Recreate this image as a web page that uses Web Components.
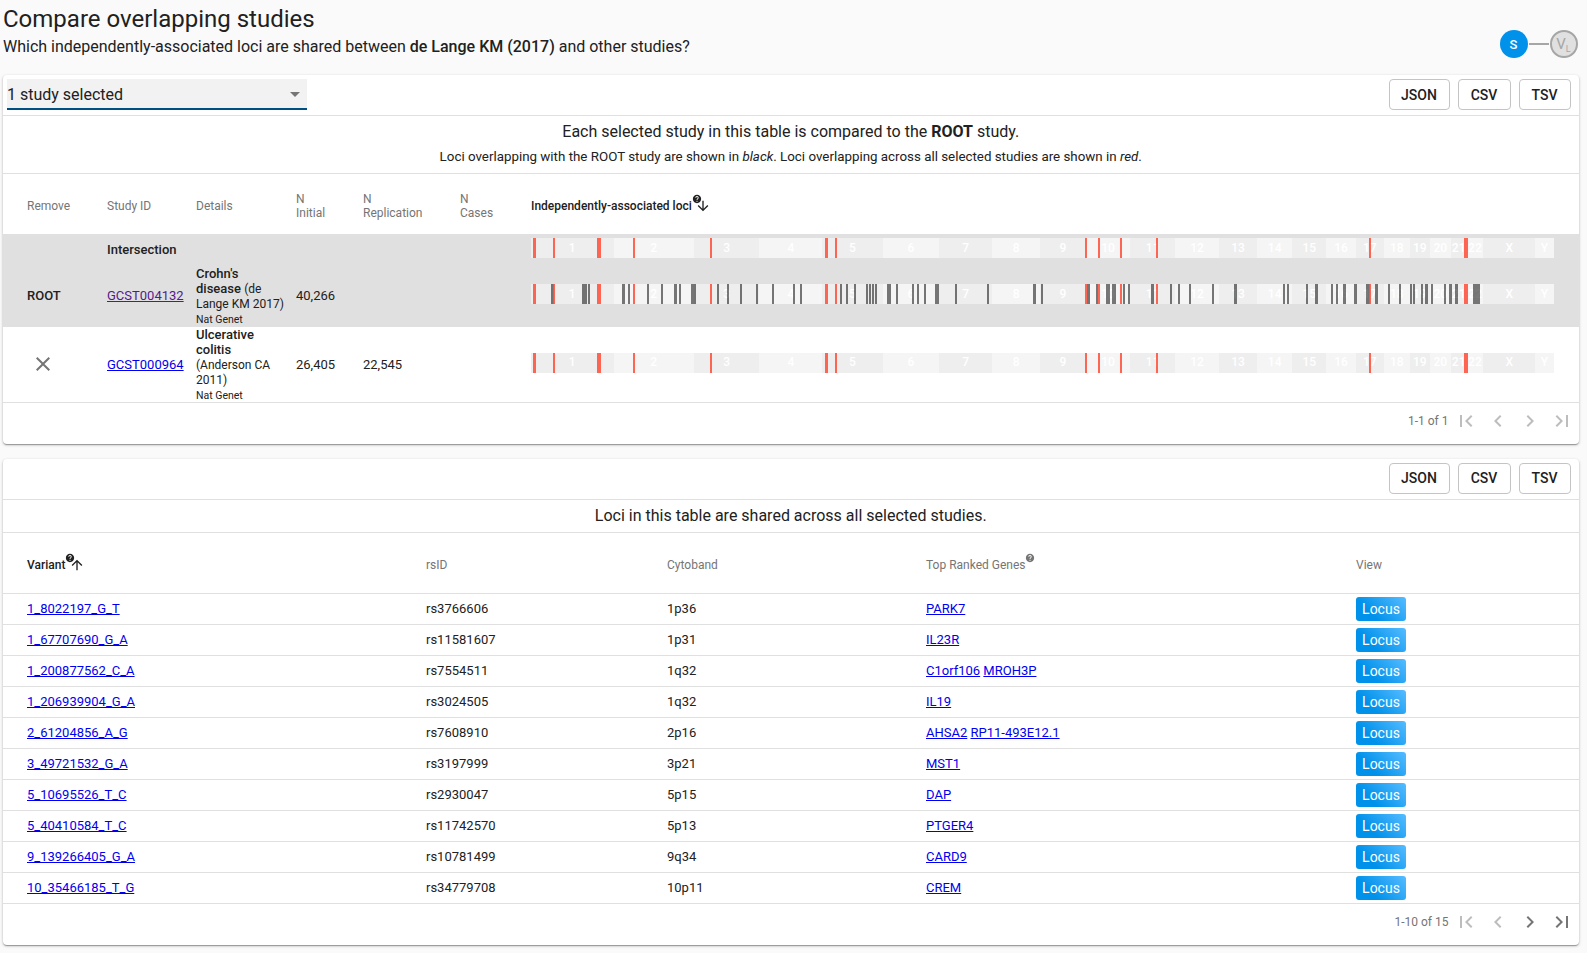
<!DOCTYPE html>
<html lang="en">
<head>
<meta charset="utf-8">
<title>Compare overlapping studies</title>
<style>
  html, body { margin: 0; background: #fafafa; }
  body {
    padding: 0 8.5px 8px 3px;
    font-family: Roboto, "Liberation Sans", sans-serif;
    color: rgba(0, 0, 0, 0.87);
  }
</style>
</head>
<body>
<compare-header></compare-header>

<data-card>
  <select-box slot="left">1 study selected</select-box>
  <card-message>
    <div class="big">Each selected study in this table is compared to the <b>ROOT</b> study.</div>
    <div class="small">Loci overlapping with the ROOT study are shown in <i>black</i>. Loci overlapping across all selected studies are shown in <i>red</i>.</div>
  </card-message>
  <studies-table></studies-table>
  <table-pager label="1-1 of 1"></table-pager>
</data-card>

<data-card>
  <card-message compact>
    <div class="big">Loci in this table are shared across all selected studies.</div>
  </card-message>
  <loci-table></loci-table>
  <table-pager label="1-10 of 15" has-next></table-pager>
</data-card>

<script>
// Material icon paths
const ICONS = {
  help: 'M12 2C6.48 2 2 6.48 2 12s4.48 10 10 10 10-4.48 10-10S17.52 2 12 2zm1 17h-2v-2h2v2zm2.07-7.75l-.9.92C13.45 12.9 13 13.5 13 15h-2v-.5c0-1.1.45-2.1 1.17-2.83l1.24-1.26c.37-.36.59-.86.59-1.41 0-1.1-.9-2-2-2s-2 .9-2 2H8c0-2.21 1.79-4 4-4s4 1.79 4 4c0 .88-.36 1.68-.93 2.25z',
  down: 'M20 12l-1.41-1.41L13 16.17V4h-2v12.17l-5.58-5.59L4 12l8 8 8-8z',
  up: 'M4 12l1.41 1.41L11 7.83V20h2V7.83l5.58 5.59L20 12l-8-8-8 8z',
  close: 'M19 6.41L17.59 5 12 10.59 6.41 5 5 6.41 10.59 12 5 17.59 6.41 19 12 13.41 17.59 19 19 17.59 13.41 12z',
  first: 'M18.41 16.59L13.82 12l4.59-4.59L17 6l-6 6 6 6zM6 6h2v12H6z',
  prev: 'M15.41 7.41L14 6l-6 6 6 6 1.41-1.41L10.83 12z',
  next: 'M8.59 16.59L13.17 12 8.59 7.41 10 6l6 6-6 6z',
  last: 'M5.59 7.41L10.18 12l-4.59 4.59L7 18l6-6-6-6zM16 6h2v12h-2z'
};

const icon = (name, size, color, cls = '') =>
  `<svg class="${cls}" width="${size}" height="${size}" viewBox="0 0 24 24" fill="${color}" aria-hidden="true"><path d="${ICONS[name]}"/></svg>`;

// Shared by both tables
const TABLE_CSS = `
  table { border-collapse: collapse; table-layout: fixed; width: 100%; font-size: 13px; color: #212121; }
  th {
    height: 56px; padding: 4px 0 0; text-align: left; vertical-align: middle;
    font-size: 12px; font-weight: 400; line-height: 14px; color: #757575;
    border-bottom: 1px solid #e0e0e0;
  }
  th.sorted { font-weight: 500; color: #212121; }
  td { padding: 0; vertical-align: middle; line-height: 15px; }
  th:first-child, td:first-child { padding-left: 24px; }
  a { color: #0000ee; text-decoration: underline; }
  a.visited { color: #551a8b; }
  .head { display: inline-flex; align-items: center; }
  .head .help { margin: -14px 0 0 0; }
  .head .sort { margin-left: -6.5px; }
`;

class CompareHeader extends HTMLElement {
  constructor() {
    super();
    this.attachShadow({ mode: 'open' });
    this.shadowRoot.innerHTML = `
      <style>
        :host { display: flex; justify-content: space-between; height: 75px; }
        h1 { margin: 0; padding-top: 5px; font-size: 24px; font-weight: 400; line-height: 29px; color: #212121; }
        p { margin: 0; padding-top: 3px; font-size: 16px; line-height: 19px; color: #212121; }
        b { font-weight: 500; }
      </style>
      <div>
        <h1>Compare overlapping studies</h1>
        <p>Which independently-associated loci are shared between <b>de Lange KM (2017)</b> and other studies?</p>
      </div>
      <study-dag></study-dag>
    `;
  }
}

class StudyDag extends HTMLElement {
  constructor() {
    super();
    this.attachShadow({ mode: 'open' });
    this.shadowRoot.innerHTML = `
      <style>
        :host { display: flex; align-items: center; height: 28px; margin: 30px 1px 0 0; }
        .node {
          box-sizing: border-box; width: 28px; height: 28px; border-radius: 50%;
          display: flex; align-items: center; justify-content: center;
        }
        .s { background: #0091ea; color: #fff; font-size: 13px; font-weight: 500; }
        .v { background: #e0e0e0; border: 2px solid #a6a6a6; color: #a6a6a6; font-size: 15px; }
        .v sub { font-size: 9px; line-height: 0; margin-top: 9px; }
        .line { width: 20px; height: 2px; margin: 0 1px; background: #a6a6a6; }
      </style>
      <div class="node s">S</div>
      <div class="line"></div>
      <div class="node v">V<sub>L</sub></div>
    `;
  }
}

class DataCard extends HTMLElement {
  constructor() {
    super();
    this.attachShadow({ mode: 'open' });
    this.shadowRoot.innerHTML = `
      <style>
        :host {
          display: block; margin-bottom: 15px; background: #fff; border-radius: 4px;
          box-shadow: 0 1px 3px rgba(0,0,0,.25), 0 1px 1px rgba(0,0,0,.16), 0 2px 1px -1px rgba(0,0,0,.14);
        }
        .bar {
          display: flex; align-items: flex-start; justify-content: space-between;
          height: 36px; padding: 4px 8px 0 4px; border-bottom: 1px solid #e0e0e0;
        }
        .buttons { display: flex; gap: 8px; margin-left: auto; }
        button {
          box-sizing: border-box; height: 31px; padding: 0; background: #fff;
          border: 1px solid #c4c4c4; border-radius: 4px;
          font: 500 14px Roboto, sans-serif; color: #212121;
        }
        .json { width: 61px; } .csv { width: 53px; } .tsv { width: 52px; }
      </style>
      <div class="bar">
        <slot name="left"></slot>
        <div class="buttons">
          <button class="json">JSON</button>
          <button class="csv">CSV</button>
          <button class="tsv">TSV</button>
        </div>
      </div>
      <slot></slot>
    `;
  }
}

class SelectBox extends HTMLElement {
  constructor() {
    super();
    this.attachShadow({ mode: 'open' });
    this.shadowRoot.innerHTML = `
      <style>
        :host {
          display: flex; align-items: center; justify-content: space-between;
          box-sizing: border-box; width: 300px; height: 31px;
          background: #f2f2f2; border-bottom: 2px solid #004f83;
          font-size: 16px; color: #212121;
        }
        span { padding-top: 2px; }
        .arrow { width: 0; height: 0; padding: 0; margin: 2px 7px 0 0; border: 5px solid transparent; border-top-color: #757575; border-bottom: 0; }
      </style>
      <span><slot></slot></span>
      <span class="arrow"></span>
    `;
  }
}

class CardMessage extends HTMLElement {
  constructor() {
    super();
    this.attachShadow({ mode: 'open' });
    this.shadowRoot.innerHTML = `
      <style>
        :host {
          display: block; box-sizing: border-box; height: 58px; padding-top: 6px;
          text-align: center; border-bottom: 1px solid #e0e0e0; color: #212121;
        }
        :host([compact]) { height: 33px; }
        ::slotted(.big) { font-size: 16px; line-height: 19px; }
        ::slotted(.small) { font-size: 13.35px; line-height: 15px; margin-top: 8px; }
      </style>
      <slot></slot>
    `;
  }
}

// Chromosome sizes in Mb, the track is laid out in proportion to them
const CHROMOSOMES = [
  ['1', 249], ['2', 242], ['3', 198], ['4', 190], ['5', 181.5], ['6', 171], ['7', 159], ['8', 145],
  ['9', 138], ['10', 134], ['11', 135], ['12', 133], ['13', 114], ['14', 107], ['15', 102], ['16', 90],
  ['17', 83], ['18', 80], ['19', 59], ['20', 64], ['21', 47], ['22', 51], ['X', 156], ['Y', 57]
];

const RED_LOCI = [
  [2, 2.5], [21.6, 2], [66.4, 4], [101.9, 2.2], [178.6, 2], [294.4, 1.8], [304, 1.8],
  [553.9, 2.2], [566.6, 2], [588.6, 2], [624.6, 2], [838.1, 2], [933, 3.6]
];

const GREY_LOCI = [
  [20.3, 2.5], [50.9, 5], [56.8, 1.5], [90.9, 3.5], [96.7, 2], [115.7, 2], [130.1, 2], [142.9, 3.5],
  [147.7, 2], [159.7, 5], [185.6, 2], [195.6, 2], [208.6, 2.5], [224.5, 2], [240.7, 2], [261.7, 2],
  [268.6, 1.8], [309.2, 1.8], [314.7, 2], [322.6, 2], [335, 2], [337.8, 1.8], [340.5, 1.8], [343.6, 1.8],
  [356.4, 3.5], [364.6, 1.8], [380.5, 1.8], [386, 1.8], [392.9, 2.5], [404.2, 3.5], [423.9, 2], [456.2, 1.8],
  [502, 2.8], [509.6, 2], [556.3, 3], [564.8, 1.8], [575.4, 3.5], [580.9, 3.8], [591.5, 1.8], [596.7, 1.8],
  [620.3, 2.8], [638.8, 2], [646.7, 1.8], [657.6, 1.8], [681.3, 2], [702.8, 2.8], [751.5, 2], [755.6, 2],
  [774.8, 1.8], [784.4, 1.8], [799.8, 1.8], [805.2, 1.8], [812.4, 1.8], [823.4, 1.8], [835.4, 3.5], [843.9, 2.8],
  [856.6, 2], [867.9, 2], [878.9, 1.8], [881.6, 1.8], [889.5, 2], [894.3, 2.4], [899.8, 1.8], [912.8, 1.8],
  [917.6, 3], [924.4, 1.8], [942.2, 2.4], [944.6, 1.8], [947, 1.8]
];

class ChrTrack extends HTMLElement {
  connectedCallback() {
    if (this.shadowRoot) return;
    this.attachShadow({ mode: 'open' });
    const marks = (list, cls) => list.map(([x, w]) =>
      `<i class="${cls}" style="left:${x}px;width:${Math.max(w, 2.2)}px"></i>`).join('');
    const bands = CHROMOSOMES.map(([name, size], i) =>
      `<div class="${i % 2 ? 'light' : 'dark'}" style="flex:${size} ${size} 0">${name}</div>`).join('');
    this.shadowRoot.innerHTML = `
      <style>
        :host { display: flex; position: relative; width: 1023px; height: 20px; margin-bottom: 3px; overflow: hidden; }
        div {
          display: flex; align-items: center; justify-content: center; min-width: 0;
          font-size: 12px; font-weight: 500; color: #fff;
        }
        .dark { background: #eeeeee; }
        .light { background: #f5f5f5; }
        i { position: absolute; top: 0; bottom: 0; }
        .red { background: rgba(255, 82, 60, 0.88); }
        .grey { background: rgba(0, 0, 0, 0.52); }
      </style>
      ${bands}
      ${this.hasAttribute('all') ? marks(GREY_LOCI, 'grey') : ''}
      ${marks(RED_LOCI, 'red')}
    `;
  }
}

class StudiesTable extends HTMLElement {
  constructor() {
    super();
    this.attachShadow({ mode: 'open' });
    this.shadowRoot.innerHTML = `
      <style>
        :host { display: block; }
        ${TABLE_CSS}
        .root { background: #e0e0e0; }
        b { font-weight: 500; }
        small { font-size: 10.5px; line-height: 1; }
        .details { padding-right: 11px; }
        .paper { font-size: 12px; line-height: 1; }
        .close { display: block; margin-left: 4px; }
        .gap { height: 30px; }
        .root-row { height: 62px; }
        .last { height: 75px; border-bottom: 1px solid #e0e0e0; }
      </style>
      <table>
        <colgroup>
          <col style="width:104px"><col style="width:89px"><col style="width:100px">
          <col style="width:67px"><col style="width:97px"><col style="width:71px"><col>
        </colgroup>
        <thead>
          <tr>
            <th>Remove</th>
            <th>Study ID</th>
            <th>Details</th>
            <th>N<br>Initial</th>
            <th>N<br>Replication</th>
            <th>N<br>Cases</th>
            <th class="sorted"><span class="head">Independently-associated loci${icon('help', 10, '#212121', 'help')}${icon('down', 16, '#212121', 'sort')}</span></th>
          </tr>
        </thead>
        <tbody>
          <tr class="root gap">
            <td></td><td><b>Intersection</b></td><td></td><td></td><td></td><td></td>
            <td><chr-track></chr-track></td>
          </tr>
          <tr class="root root-row">
            <td><b>ROOT</b></td>
            <td><a class="visited" href="#">GCST004132</a></td>
            <td class="details"><b>Crohn's</b> <b>disease</b> <span class="paper">(de</span> <span class="paper">Lange KM 2017)</span><br><small>Nat Genet</small></td>
            <td>40,266</td><td></td><td></td>
            <td><chr-track all></chr-track></td>
          </tr>
          <tr class="last">
            <td>${icon('close', 24, '#757575', 'close')}</td>
            <td><a href="#">GCST000964</a></td>
            <td class="details"><b>Ulcerative</b> <b>colitis</b> <span class="paper">(Anderson CA</span> <span class="paper">2011)</span><br><small>Nat Genet</small></td>
            <td>26,405</td><td>22,545</td><td></td>
            <td><chr-track></chr-track></td>
          </tr>
        </tbody>
      </table>
    `;
  }
}

const LOCI = [
  ['1_8022197_G_T', 'rs3766606', '1p36', ['PARK7']],
  ['1_67707690_G_A', 'rs11581607', '1p31', ['IL23R']],
  ['1_200877562_C_A', 'rs7554511', '1q32', ['C1orf106', 'MROH3P']],
  ['1_206939904_G_A', 'rs3024505', '1q32', ['IL19']],
  ['2_61204856_A_G', 'rs7608910', '2p16', ['AHSA2', 'RP11-493E12.1']],
  ['3_49721532_G_A', 'rs3197999', '3p21', ['MST1']],
  ['5_10695526_T_C', 'rs2930047', '5p15', ['DAP']],
  ['5_40410584_T_C', 'rs11742570', '5p13', ['PTGER4']],
  ['9_139266405_G_A', 'rs10781499', '9q34', ['CARD9']],
  ['10_35466185_T_G', 'rs34779708', '10p11', ['CREM']]
];

class LociTable extends HTMLElement {
  constructor() {
    super();
    this.attachShadow({ mode: 'open' });
    const rows = LOCI.map(([variant, rsid, band, genes]) => `
      <tr>
        <td><a href="#">${variant}</a></td>
        <td>${rsid}</td>
        <td>${band}</td>
        <td>${genes.map(g => `<a href="#">${g}</a>`).join(' ')}</td>
        <td><locus-button>Locus</locus-button></td>
      </tr>`).join('');
    this.shadowRoot.innerHTML = `
      <style>
        :host { display: block; }
        ${TABLE_CSS}
        tbody tr { height: 31px; border-bottom: 1px solid #e0e0e0; }
        td { padding-bottom: 1px; }
      </style>
      <table>
        <colgroup>
          <col style="width:423px"><col style="width:241px"><col style="width:259px"><col style="width:430px"><col>
        </colgroup>
        <thead>
          <tr>
            <th class="sorted"><span class="head">Variant${icon('help', 10, '#212121', 'help')}${icon('up', 16, '#212121', 'sort')}</span></th>
            <th>rsID</th>
            <th>Cytoband</th>
            <th><span class="head">Top Ranked Genes${icon('help', 10, '#757575', 'help')}</span></th>
            <th>View</th>
          </tr>
        </thead>
        <tbody>${rows}</tbody>
      </table>
    `;
  }
}

class LocusButton extends HTMLElement {
  constructor() {
    super();
    this.attachShadow({ mode: 'open' });
    this.shadowRoot.innerHTML = `
      <style>
        :host {
          display: flex; align-items: center; justify-content: center; box-sizing: border-box;
          width: 50px; height: 24px; margin-top: 1px; padding-top: 2px; border-radius: 3px;
          background: linear-gradient(45deg, #0091ea 30%, #50b9ff 95%);
          font-size: 14px; font-weight: 400; color: #fff;
        }
      </style>
      <slot></slot>
    `;
  }
}

class TablePager extends HTMLElement {
  constructor() {
    super();
    this.attachShadow({ mode: 'open' });
    const label = this.getAttribute('label') || '';
    const on = this.hasAttribute('has-next') ? '#757575' : '#bdbdbd';
    this.shadowRoot.innerHTML = `
      <style>
        :host {
          display: flex; align-items: center; justify-content: flex-end; box-sizing: border-box;
          height: 41px; padding: 0 1px 4px 0; font-size: 12px; color: #757575;
        }
        span { margin-right: 1px; }
        .btn { display: flex; width: 32px; justify-content: center; }
      </style>
      <span>${label}</span>
      <div class="btn">${icon('first', 24, '#bdbdbd')}</div>
      <div class="btn">${icon('prev', 24, '#bdbdbd')}</div>
      <div class="btn">${icon('next', 24, on)}</div>
      <div class="btn">${icon('last', 24, on)}</div>
    `;
  }
}

customElements.define('chr-track', ChrTrack);
customElements.define('study-dag', StudyDag);
customElements.define('compare-header', CompareHeader);
customElements.define('data-card', DataCard);
customElements.define('select-box', SelectBox);
customElements.define('card-message', CardMessage);
customElements.define('studies-table', StudiesTable);
customElements.define('locus-button', LocusButton);
customElements.define('loci-table', LociTable);
customElements.define('table-pager', TablePager);
</script>
</body>
</html>
